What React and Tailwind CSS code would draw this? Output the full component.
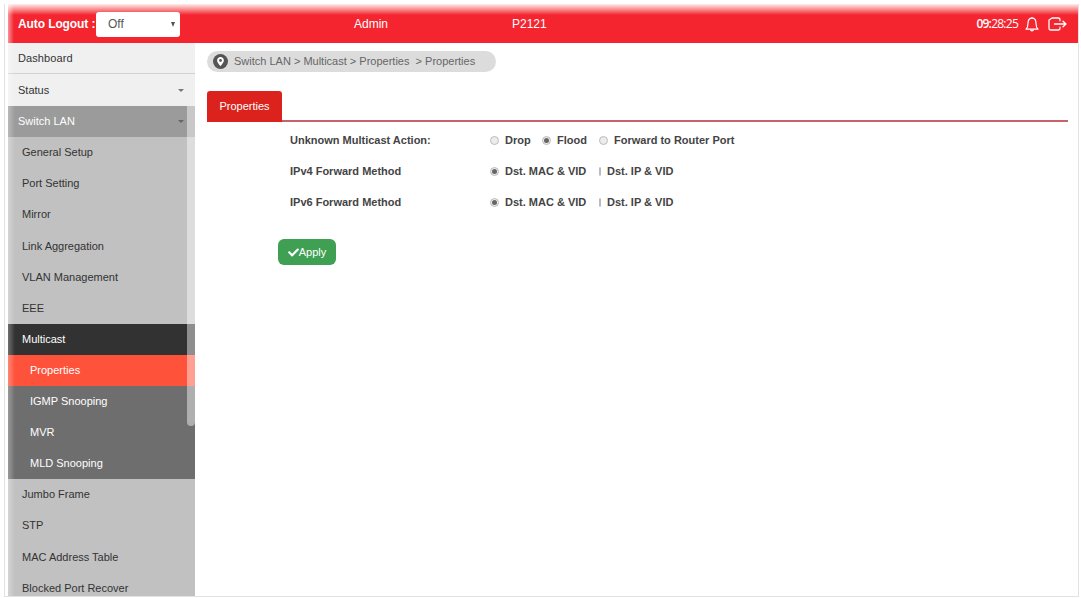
import { useState } from "react";
import { FaCheck, FaMapMarkerAlt } from "react-icons/fa";

const subItems = [
  "General Setup",
  "Port Setting",
  "Mirror",
  "Link Aggregation",
  "VLAN Management",
  "EEE",
];

const multicastItems = ["Properties", "IGMP Snooping", "MVR", "MLD Snooping"];

const lowerItems = [
  "Jumbo Frame",
  "STP",
  "MAC Address Table",
  "Blocked Port Recover",
];

function Header() {
  return (
    <header className="relative flex h-[39px] shrink-0 items-center bg-[#f4252f] pt-px text-[12px] text-white">
      <div className="absolute inset-x-0 top-0 h-[11px] bg-linear-to-b from-[#fdeeea] to-transparent"></div>
      <div className="absolute inset-y-0 left-0 w-[6px] bg-linear-to-r from-white/50 to-transparent"></div>

      <div className="relative flex w-full items-center">
        <span className="ml-[10px] w-[78px] whitespace-nowrap text-[12px] font-bold tracking-[-0.1px]">
          Auto Logout :
        </span>
        <div className="flex h-[25px] w-[84px] items-center justify-between rounded-[3px] bg-white pr-[5px] pl-[12px] text-[12px] text-[#555]">
          <span>Off</span>
          <span className="h-0 w-0 border-x-[2.5px] border-t-[5px] border-x-transparent border-t-[#555]"></span>
        </div>
        <span className="ml-[174px] w-[158px] text-[12px]">Admin</span>
        <span className="text-[12px]">P2121</span>
        <span className="ml-auto font-[Open_Sans,sans-serif] text-[12px] tracking-[-0.75px]">
          <b className="font-semibold">09:</b>28:25
        </span>

        <svg
          className="ml-[7px] h-[16px] w-[14px]"
          viewBox="0 0 14 16"
          fill="none"
          stroke="currentColor"
          strokeWidth="1.2"
          strokeLinejoin="round"
        >
          <path d="M1 13.2h12c-1.500-1.300-2-2.700-2-6 0-3-1.400-5-4-5s-4 2-4 5c0 3.300-.500 4.700-2 6z" />
          <path d="M7 2.200V1M5.600 13.400a1.400 1.400 0 0 0 2.800 0" />
        </svg>
        <svg
          className="mr-[11px] ml-[9px] h-[14px] w-[19px]"
          viewBox="0 0 19 14"
          fill="none"
          stroke="currentColor"
          strokeWidth="1.3"
          strokeLinejoin="round"
          strokeLinecap="round"
        >
          <path d="M12 3.800V2.500A1.500 1.500 0 0 0 10.500 1H4L1 3v8.500A1.500 1.500 0 0 0 2.500 13h8a1.500 1.500 0 0 0 1.500-1.500v-1.300" />
          <path d="M6.500 7H18M15 4.200 18 7l-3 2.800" />
        </svg>
      </div>
    </header>
  );
}

function Sidebar() {
  return (
    <nav className="relative w-[187px] shrink-0 overflow-hidden text-[11px] text-[#333]">
      <div className="flex h-[31px] items-center border-b border-[#d2d2d2] bg-[#f0f0f0] pl-[10px] tracking-[0.1px]">
        Dashboard
      </div>
      <div className="flex h-[32px] items-center justify-between bg-[#f0f0f0] pr-[11px] pl-[10px]">
        Status
        <span className="h-0 w-0 border-x-[3px] border-t-[3px] border-x-transparent border-t-[#777]"></span>
      </div>
      <div className="flex h-[31px] items-center justify-between bg-[#9b9b9b] pr-[11px] pl-[10px] text-white">
        Switch LAN
        <span className="h-0 w-0 border-x-[3px] border-t-[3px] border-x-transparent border-t-[#666]"></span>
      </div>

      <div className="bg-[#c1c1c1]">
        {subItems.map((item) => (
          <div key={item} className="flex h-[31.1px] items-center pl-[14px]">
            {item}
          </div>
        ))}
        <div className="flex h-[31.1px] items-center bg-[#323232] pl-[14px] text-white">
          Multicast
        </div>
        {multicastItems.map((item) => (
          <div
            key={item}
            className={`flex h-[31.1px] items-center pl-[22px] text-white ${
              item === "Properties" ? "bg-[#ff523b]" : "bg-[#6e6e6e]"
            }`}
          >
            {item}
          </div>
        ))}
        {lowerItems.map((item) => (
          <div key={item} className="flex h-[31.1px] items-center pl-[14px]">
            {item}
          </div>
        ))}
      </div>

      {/* Scrollbar */}
      <div className="absolute top-[63px] right-0 h-[320px] w-[8px] rounded-b bg-white/45"></div>
      <div className="absolute inset-y-0 left-0 w-[7px] bg-linear-to-r from-white/30 to-transparent"></div>
    </nav>
  );
}

function Radio({ label, checked, onSelect, className }) {
  return (
    <button
      onClick={onSelect}
      className={`flex items-center gap-[6px] whitespace-nowrap ${className || ""}`}
    >
      <span className="flex h-[9px] w-[9px] items-center justify-center rounded-full border border-[#bbb] bg-[#ececec]">
        {checked && (
          <span className="h-[5px] w-[5px] rounded-full bg-[#666]"></span>
        )}
      </span>
      {label}
    </button>
  );
}

function FormRow({ label, options, initial, firstWidth }) {
  const [value, setValue] = useState(initial);

  return (
    <div className="flex h-[31px] items-center">
      <span className="w-[200px] whitespace-nowrap">{label}</span>
      {options.map((option, i) => (
        <Radio
          key={option}
          label={option}
          checked={value === option}
          onSelect={() => setValue(option)}
          className={i === 0 ? firstWidth : i === 1 ? "w-[57px]" : ""}
        />
      ))}
    </div>
  );
}

function App() {
  return (
    <div className="h-[598px] w-[1081px] overflow-hidden bg-white pt-[4px] pr-[2px] pl-[4px] font-[Liberation_Sans,Arial,sans-serif]">
      <div className="flex h-[593px] flex-col overflow-hidden border-r border-b border-l border-[#e2e2e2] pl-[3px]">
        <Header />

        <div className="flex min-h-0 flex-1">
          <Sidebar />

          <main className="flex-1 pr-[10px] pl-[12px]">
            <div className="mt-[8px] flex h-[21px] w-[289px] items-center rounded-full bg-[#dcdcdc] pl-[6px] text-[11px] text-[#666]">
              <span className="mr-[6px] flex h-[15px] w-[15px] items-center justify-center rounded-full bg-[#555]">
                <FaMapMarkerAlt className="h-[9px] w-[9px] text-white" />
              </span>
              <span className="whitespace-pre">
                Switch LAN &gt; Multicast &gt; Properties  &gt; Properties
              </span>
            </div>

            <div className="mt-[19px] flex h-[31px] border-b-2 border-[#c4636b]">
              <div className="-mb-[2px] flex h-[31px] w-[75px] items-center justify-center rounded-t-[3px] bg-[#dc221c] text-[11px] text-white">
                Properties
              </div>
            </div>

            <div className="mt-[3px] pl-[83px] text-[11px] font-bold text-[#444]">
              <FormRow
                label="Unknown Multicast Action:"
                options={["Drop", "Flood", "Forward to Router Port"]}
                initial="Flood"
                firstWidth="w-[52px]"
              />
              <FormRow
                label="IPv4 Forward Method"
                options={["Dst. MAC & VID", "Dst. IP & VID"]}
                initial="Dst. MAC & VID"
                firstWidth="w-[109px]"
              />
              <FormRow
                label="IPv6 Forward Method"
                options={["Dst. MAC & VID", "Dst. IP & VID"]}
                initial="Dst. MAC & VID"
                firstWidth="w-[109px]"
              />
            </div>

            <button className="mt-[21px] ml-[71px] flex h-[26px] w-[58px] items-center justify-center rounded-[6px] bg-[#3f9f52] text-[11px] text-white">
              <FaCheck className="h-[11px] w-[11px]" />
              Apply
            </button>
          </main>
        </div>
      </div>
    </div>
  );
}

export default App;
